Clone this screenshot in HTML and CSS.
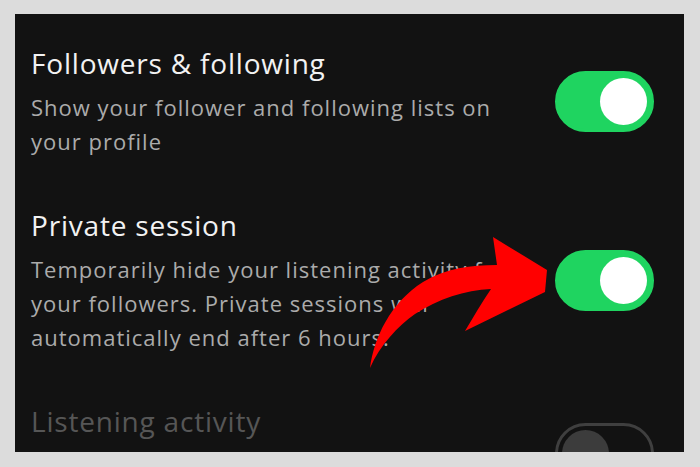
FILE: index.html
```html
<!DOCTYPE html>
<html lang="en">
<head>
    <meta charset="UTF-8">
    <meta name="viewport" content="width=device-width, initial-scale=1.0">
    <title>Privacy settings</title>
    <link rel="stylesheet" href="styles.css">
</head>
<body>
    <div class="panel">
        <div class="setting">
            <div class="setting-text">
                <div class="setting-title">Followers &amp; following</div>
                <div class="setting-desc">Show your follower and following lists on<br>your profile</div>
            </div>
            <span class="switch on"><span class="knob"></span></span>
        </div>

        <div class="setting">
            <div class="setting-text">
                <div class="setting-title">Private session</div>
                <div class="setting-desc">Temporarily hide your listening activity from<br>your followers. Private sessions will<br>automatically end after 6 hours.</div>
            </div>
            <span class="switch on"><span class="knob"></span></span>
        </div>

        <div class="setting disabled">
            <div class="setting-text">
                <div class="setting-title">Listening activity</div>
            </div>
            <span class="switch"><span class="knob"></span></span>
        </div>
    </div>

    <!-- red pointer over the private session toggle -->
    <svg class="pointer" viewBox="0 0 700 467" width="700" height="467">
        <path fill="#ff0000" d="M370,368 C374,338 390,303 423,282 C446,268 471,265 497,265 L493,237 L547,270 L545,292 L465,331 C474,316 482,302 491,289 C465,290 438,299 415,314 C398,326 380,345 370,368 Z"/>
    </svg>
</body>
</html>
```

FILE: styles.css
```css
body {
    margin: 0;
    padding: 14px 16px 15px 15px;
    background-color: #dcdcdc;
    font-family: "Open Sans", Arial, sans-serif;
    position: relative;
    height: 438px;
}
.panel {
    background-color: #121212;
    width: 669px;
    height: 438px;
    box-sizing: border-box;
    padding: 31px 30px 0 16px;
    overflow: hidden;
}
.setting {
    display: flex;
    align-items: center;
    justify-content: space-between;
    margin-bottom: 49px;
}
.setting-title {
    color: #f2f2f2;
    font-size: 28px;
    line-height: 36px;
    letter-spacing: 0.8px;
}
.setting-desc {
    color: #ababab;
    font-size: 22px;
    line-height: 34px;
    letter-spacing: 1px;
    margin-top: 9px;
}
.switch {
    width: 99px;
    height: 61px;
    border-radius: 31px;
    box-sizing: border-box;
    border: 3px solid #3f3f3f;
    display: flex;
    align-items: center;
    padding: 0 4px;
    flex-shrink: 0;
}
.knob {
    width: 47px;
    height: 47px;
    border-radius: 50%;
    background-color: #3c3c3c;
}
.switch.on {
    background-color: #1fd460;
    border-color: #1fd460;
    justify-content: flex-end;
}
.switch.on .knob {
    background-color: #ffffff;
}
.disabled {
    align-items: flex-start;
}
.disabled .switch {
    margin-top: 20px;
}
.disabled .setting-title {
    color: #565656;
}
.pointer {
    position: absolute;
    top: 0;
    left: 0;
}
```
